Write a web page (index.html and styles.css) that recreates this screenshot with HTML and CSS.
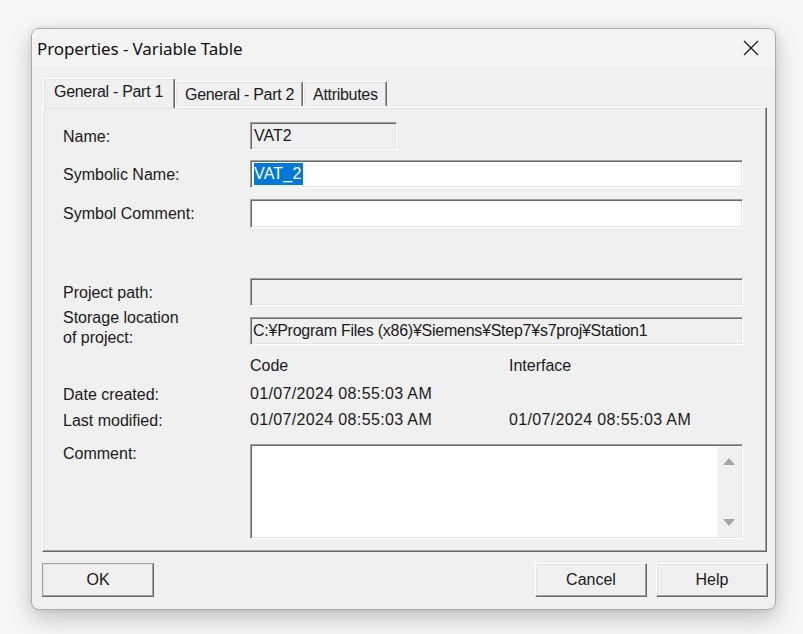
FILE: index.html
```html
<!DOCTYPE html>
<html>
<head>
<meta charset="utf-8">
<link rel="stylesheet" href="styles.css">
</head>
<body>
<div class="window">
  <div class="titlebar">
    <span class="title">Properties - Variable Table</span>
    <span class="close"><svg width="16" height="16" viewBox="0 0 16 16"><path d="M1 1 L15 15 M15 1 L1 15" stroke="#1a1a1a" stroke-width="1.3" fill="none"/></svg></span>
  </div>
  <div class="client">
    <div class="tabs">
      <div class="tab active">General - Part 1</div>
      <div class="tab">General - Part 2</div>
      <div class="tab">Attributes</div>
    </div>
    <div class="panel">
      <div class="row r-name">
        <div class="label">Name:</div>
        <div class="field readonly short"><span>VAT2</span></div>
      </div>
      <div class="row r-sym">
        <div class="label">Symbolic Name:</div>
        <div class="field"><span class="sel">VAT_2</span></div>
      </div>
      <div class="row r-symc">
        <div class="label">Symbol Comment:</div>
        <div class="field"></div>
      </div>
      <div class="row r-path">
        <div class="label">Project path:</div>
        <div class="field readonly"></div>
      </div>
      <div class="row r-store">
        <div class="label two">Storage location<br>of project:</div>
        <div class="field readonly"><span class="path">C:¥Program Files (x86)¥Siemens¥Step7¥s7proj¥Station1</span></div>
      </div>
      <div class="row r-hdr">
        <div class="label"></div>
        <div class="cols"><span class="c1">Code</span><span class="c2">Interface</span></div>
      </div>
      <div class="row r-date">
        <div class="label">Date created:</div>
        <div class="cols val"><span class="c1">01/07/2024 08:55:03 AM</span><span class="c2"></span></div>
      </div>
      <div class="row r-mod">
        <div class="label">Last modified:</div>
        <div class="cols val"><span class="c1">01/07/2024 08:55:03 AM</span><span class="c2">01/07/2024 08:55:03 AM</span></div>
      </div>
      <div class="row r-comment">
        <div class="label">Comment:</div>
        <div class="field memo">
          <div class="memo-text"></div>
          <div class="scrollbar">
            <svg width="14" height="10" viewBox="0 0 14 10"><path d="M1 9 L7 2 L13 9 Z" fill="#a6a6a6"/></svg>
            <svg width="14" height="10" viewBox="0 0 14 10"><path d="M1 1 L13 1 L7 8 Z" fill="#a6a6a6"/></svg>
          </div>
        </div>
      </div>
    </div>
    <div class="buttons">
      <div class="btn">OK</div>
      <div class="spacer"></div>
      <div class="btn">Cancel</div>
      <div class="btn">Help</div>
    </div>
  </div>
</div>
</body>
</html>
```

FILE: styles.css
```css
html, body {
  margin: 0;
  padding: 0;
}
body {
  width: 803px;
  height: 634px;
  background: #f6f6f6;
  overflow: hidden;
  font-family: "Liberation Sans", Arial, sans-serif;
  font-size: 16px;
  color: #1a1a1a;
}
.window {
  margin: 28px 0 0 31px;
  width: 743px;
  height: 580px;
  border: 1px solid #ababab;
  border-radius: 8px;
  background: #f0f0f0;
  box-shadow: 0 8px 22px rgba(0,0,0,0.22), 0 0 6px rgba(0,0,0,0.08);
  overflow: hidden;
  display: flex;
  flex-direction: column;
}
.titlebar {
  height: 38px;
  background: #f3f3f3;
  display: flex;
  align-items: center;
  justify-content: space-between;
  padding: 0 16px 0 5px;
}
.title {
  font-family: "Noto Sans", "Open Sans", sans-serif;
  font-size: 17px;
  color: #111;
  letter-spacing: -0.1px;
}
.close {
  display: flex;
  width: 16px;
  height: 16px;
}
.client {
  flex: 1;
  padding: 10px 9px 0 10px;
  display: flex;
  flex-direction: column;
}
.tabs {
  display: flex;
  align-items: flex-end;
  height: 30px;
  padding-left: 1px;
  position: relative;
  z-index: 2;
}
.tab {
  height: 24px;
  margin-bottom: 1px;
  padding: 0 8px 0 9px;
  line-height: 25px;
  border-top: 1px solid #fff;
  border-left: 1px solid #fff;
  border-right: 1px solid #696969;
  box-shadow: inset -1px 0 0 #a0a0a0, inset 1px 1px 0 #e3e3e3;
  border-radius: 2px 2px 0 0;
  font-size: 16px;
  letter-spacing: -0.3px;
  background: #f0f0f0;
}
.tab.active {
  height: 29px;
  margin-bottom: -1px;
  line-height: 26px;
  padding: 0 11px 0 10px;
  background: #f0f0f0;
}
.panel {
  height: 445px;
  border-top: 1px solid #fff;
  border-left: 1px solid #fff;
  border-right: 1px solid #696969;
  border-bottom: 1px solid #696969;
  box-shadow: inset -1px -1px 0 #a0a0a0, inset 1px 1px 0 #e3e3e3;
  padding: 14px 22px 0 20px;
  box-sizing: border-box;
  width: 725px;
}
.row {
  display: flex;
  align-items: center;
}
.label {
  width: 187px;
  flex: none;
  line-height: 19px;
}
.field {
  box-sizing: border-box;
  width: 493px;
  height: 28px;
  background: #fff;
  border: 1px solid;
  border-color: #a0a0a0 #fff #fff #a0a0a0;
  box-shadow: inset 1px 1px 0 #696969, inset -1px -1px 0 #e3e3e3;
  display: flex;
  align-items: center;
  padding-left: 3px;
  line-height: 22px;
}
.field.readonly {
  background: #f0f0f0;
}
.field.short {
  width: 147px;
}
.sel {
  background: #0078d7;
  color: #fff;
  padding: 0 1px 0 0;
  letter-spacing: 0.2px;
}
.path {
  font-size: 16px;
  letter-spacing: -0.25px;
  margin-left: -1px;
}
.val {
  font-size: 16px;
  letter-spacing: 0.35px;
}
.r-name { height: 28px; }
.r-sym { height: 28px; margin-top: 10px; }
.r-symc { height: 29px; margin-top: 11px; }
.r-symc .field { height: 29px; }
.r-path { height: 28px; margin-top: 50px; }
.r-store { height: 28px; margin-top: 11px; }
.r-store .label { margin-top: -6px; line-height: 20px; }
.r-hdr { height: 22px; margin-top: 10px; }
.r-date { height: 22px; margin-top: 6px; }
.r-mod { height: 22px; margin-top: 4px; }
.r-comment { align-items: flex-start; margin-top: 13px; }
.r-comment .label { margin-top: 0px; }
.cols {
  display: flex;
}
.c1 { width: 259px; }
.field.memo {
  height: 95px;
  padding: 0;
  align-items: stretch;
  justify-content: space-between;
}
.memo-text { flex: 1; }
.scrollbar {
  width: 24px;
  background: #f0f0f0;
  margin: 2px 1px 1px 0;
  display: flex;
  flex-direction: column;
  justify-content: space-between;
  align-items: center;
  padding: 9px 0 9px;
  box-sizing: border-box;
}
.scrollbar svg { display: block; }
.buttons {
  display: flex;
  margin-top: 11px;
  gap: 9px;
  width: 726px;
}
.spacer { flex: 1; }
.btn {
  box-sizing: border-box;
  width: 112px;
  height: 34px;
  border: 1px solid;
  border-color: #fff #696969 #696969 #fff;
  box-shadow: inset -1px -1px 0 #a0a0a0, inset 1px 1px 0 #e3e3e3;
  display: flex;
  align-items: center;
  justify-content: center;
  font-size: 16px;
}
.btn:first-child {
  border-color: #a0a0a0 #696969 #696969 #a0a0a0;
}
```
